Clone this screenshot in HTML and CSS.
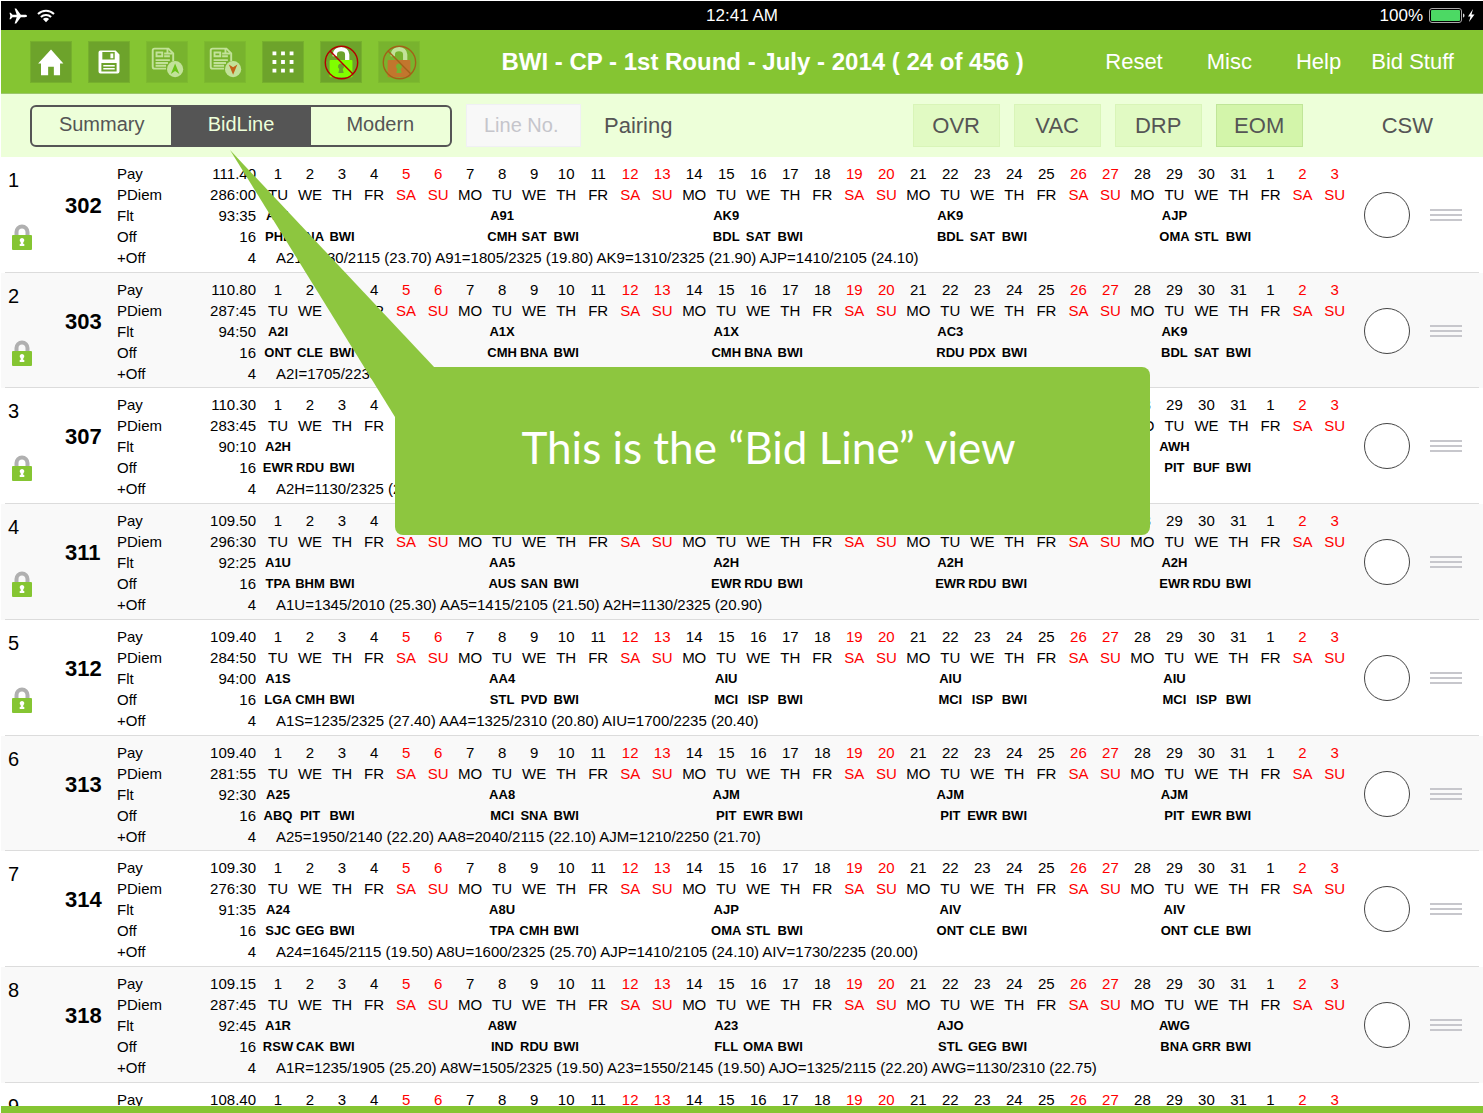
FILE: index.html
```html
<!DOCTYPE html>
<html lang="en">
<head>
<meta charset="utf-8">
<title>BWI - CP - Bid Lines</title>
<link rel="stylesheet" href="styles.css">
</head>
<body>
<div class="app">
  <div class="status">
    <div class="status-side">
      <svg width="18" height="18" viewBox="0 0 18 18" aria-hidden="true"><path fill="#fff" d="M18 9c0-.8-.9-1.200-2-1.200h-4.200L7.200 1.500H5.600l2.100 6.300H3.500L1.700 5.700H.5L1.300 9 .5 12.300h1.200l1.800-2.100h4.200l-2.100 6.300h1.600l4.600-6.300H16c1.100 0 2-.4 2-1.200z"/></svg>
      <svg width="18" height="14" viewBox="0 0 18 14" aria-hidden="true"><g fill="none" stroke="#fff" stroke-width="2"><path d="M1 5a11.500 11.500 0 0 1 16 0"/><path d="M3.900 8a7.300 7.300 0 0 1 10.200 0"/></g><path fill="#fff" d="M9 13.300 5.900 10.100a4.500 4.500 0 0 1 6.200 0z"/></svg>
    </div>
    <div class="status-time">12:41 AM</div>
    <div class="status-side status-right">
      <span>100%</span>
      <svg width="46" height="16" viewBox="0 0 46 16" aria-hidden="true"><rect x=".5" y=".5" width="32" height="14" rx="2.500" fill="none" stroke="#aaa"/><rect x="2" y="2" width="29" height="11" rx="1" fill="#4cd964"/><path fill="#ddd" d="M34 5.500c2 .5 2 3.500 0 4z"/><path fill="#fff" d="M44 1l-5 7.500h2.500L40 14l5.500-7.500h-3z"/></svg>
    </div>
  </div>

  <header class="header">
    <div class="tools">
      <button class="tool" aria-label="Home"><svg viewBox="0 0 42 42"><path fill="#fff" d="M21 8 34 22.500h-3.500V35H24v-9h-6v9h-7.500V22.500H7.500z"/></svg></button>
      <button class="tool" aria-label="Save"><svg viewBox="0 0 42 42"><path fill="#fff" fill-rule="evenodd" d="M12 9h16l4 4v18a2 2 0 0 1-2 2H12a2 2 0 0 1-2-2V11a2 2 0 0 1 2-2zm2 1.500v8h13v-8zm-1 11.500v9h16v-9zM22.500 12h3v5h-3z"/><path stroke="#fff" stroke-width="1.500" d="M15 25h12M15 28h12"/></svg></button>
      <button class="tool" disabled aria-label="Move up"><svg viewBox="0 0 42 42"><g fill="none" stroke="#fff" stroke-width="2"><path d="M27.500 20V12l-5-5H8a2 2 0 0 0-2 2v17a2 2 0 0 0 2 2h12"/><path d="M21.500 7v5h5M10 11h6v4h-6zM18 12h3M18 15h6M9 19h15M9 22h13M9 25h11"/></g><circle cx="29.500" cy="28.500" r="8.500" fill="#fff"/><path fill="#50c000" d="m29.500 22.500 4.500 11-4.500-3-4.500 3z"/></svg></button>
      <button class="tool" disabled aria-label="Move down"><svg viewBox="0 0 42 42"><g fill="none" stroke="#fff" stroke-width="2"><path d="M27.500 20V12l-5-5H8a2 2 0 0 0-2 2v17a2 2 0 0 0 2 2h12"/><path d="M21.500 7v5h5M10 11h6v4h-6zM18 12h3M18 15h6M9 19h15M9 22h13M9 25h11"/></g><circle cx="29.500" cy="28.500" r="8.500" fill="#fff"/><path fill="#f00" d="m29.500 34.500 4.500-11-4.500 3-4.500-3z"/></svg></button>
      <button class="tool" aria-label="Grid"><svg viewBox="0 0 42 42"><path stroke="#fff" stroke-width="4" stroke-dasharray="4 5" d="M10 12h23M10 21h23M10 30h23"/></svg></button>
      <button class="tool" aria-label="Remove top locks"><svg viewBox="0 0 42 42"><path fill="none" stroke="#fff" stroke-width="4.500" d="M14.500 15v-2a6.500 5.500 0 0 1 13 0v7"/><rect x="9" y="19" width="24" height="18" rx="1" fill="#80ff00"/><path fill="#67a12b" d="M21 22.500a3.200 3.200 0 0 1 1.800 5.800l1 4.200h-5.600l1-4.200A3.200 3.200 0 0 1 21 22.500z"/><g fill="none" stroke="#b40000" stroke-width="1.500"><circle cx="21.500" cy="21.500" r="17"/><path d="m9.500 9.500 24 24"/></g></svg></button>
      <button class="tool" disabled aria-label="Remove bottom locks"><svg viewBox="0 0 42 42"><path fill="none" stroke="#fff" stroke-width="4.500" d="M14.500 15v-2a6.500 5.500 0 0 1 13 0v7"/><rect x="9" y="19" width="24" height="18" rx="1" fill="#ff2a2a"/><path fill="#67a12b" d="M21 22.500a3.200 3.200 0 0 1 1.800 5.800l1 4.200h-5.600l1-4.200A3.200 3.200 0 0 1 21 22.500z"/><g fill="none" stroke="#c00000" stroke-width="1.500"><circle cx="21.500" cy="21.500" r="17"/><path d="m9.500 9.500 24 24"/></g></svg></button>
    </div>
    <h1 class="title">BWI - CP - 1st Round - July - 2014 ( 24 of 456 )</h1>
    <nav class="menu">
      <button>Reset</button>
      <button>Misc</button>
      <button>Help</button>
      <button class="menu-last">Bid Stuff</button>
    </nav>
  </header>

  <div class="bar">
    <div class="segments">
      <button>Summary</button>
      <button class="on" aria-pressed="true">BidLine</button>
      <button>Modern</button>
    </div>
    <input class="line-no" type="text" placeholder="Line No." aria-label="Line No.">
    <button class="plain">Pairing</button>
    <div class="filters">
      <button>OVR</button>
      <button>VAC</button>
      <button>DRP</button>
      <button class="on">EOM</button>
    </div>
    <button class="plain">CSW</button>
  </div>

  <main class="list" id="list"></main>
  <div class="foot"></div>

  <aside class="callout">
    <svg class="pointer" width="206" height="267" viewBox="0 0 206 267" aria-hidden="true"><path fill="#8dc63f" d="M0 0 205 218v49h-40z"/></svg>
    <p>This is the “Bid Line” view</p>
  </aside>
</div>
<script src="app.js"></script>
</body>
</html>
```
FILE: styles.css
```css
* { box-sizing: border-box; }
body {
  margin: 0;
  background: #fff;
  color: #000;
  font: 15px/21px "Liberation Sans", Arial, sans-serif;
}
button, input { font: inherit; color: inherit; }
button { padding: 0; border: 0; background: none; }

.app {
  position: relative;
  display: flex;
  flex-direction: column;
  height: 100vh;
  padding: 1px 0 0 1px;
  overflow: hidden;
}

/* status bar */
.status {
  display: flex;
  align-items: center;
  height: 29px;
  padding: 0 8px;
  background: #000;
  color: #fff;
  font-size: 17px;
}
.status-side { display: flex; flex: 1; align-items: center; gap: 10px; }
.status-right { justify-content: flex-end; gap: 6px; }

/* header */
.header {
  display: flex;
  align-items: center;
  justify-content: space-between;
  height: 64px;
  padding: 0 29px;
  background: #85c532;
  border-bottom: 1px solid #9cc76b;
  color: #fff;
  font-size: 22px;
}
.tools { display: flex; gap: 16px; }
.tool {
  width: 42px;
  height: 42px;
  background: #6da32b;
  border: 1px solid #76b02d;
}
.tool:disabled { opacity: .5; }
.tool svg { display: block; width: 100%; height: 100%; }
.title { margin: 0; font-size: 24px; font-weight: bold; white-space: nowrap; }
.menu { display: flex; gap: 44px; }
.menu-last { margin-left: -14px; }

/* view bar */
.bar {
  display: flex;
  align-items: center;
  height: 63px;
  padding: 0 50px 0 29px;
  background: #edffd9;
  color: #555;
  font-size: 22px;
}
.segments {
  display: flex;
  width: 422px;
  height: 42px;
  border: 2px solid #555;
  border-radius: 6px;
  overflow: hidden;
  font-size: 20px;
}
.segments button { flex: 1; padding-bottom: 2px; }
.segments .on { background: #555; color: #edffd9; }
.line-no {
  width: 115px;
  height: 43px;
  margin: 0 23px 0 14px;
  padding: 0 17px;
  border: 1px solid #f0f0f4;
  background: #f8f8f8;
  font-size: 20px;
}
.line-no::placeholder { color: #c5c5cb; opacity: 1; }
.filters { display: flex; gap: 14px; margin: 0 79px 0 auto; }
.filters button {
  width: 87px;
  height: 43px;
  border: 1px solid #d9f5b8;
  background: #e1fac3;
}
.filters .on { background: #d3f5aa; border-color: #c0e698; }

/* bid lines */
.list { flex: 1; overflow: hidden; }
.line {
  display: grid;
  grid-template-columns: 61px 51px 149px 1fr 132px;
  align-items: start;
  height: 116px;
  padding-top: 6px;
  background: linear-gradient(#dcdcdc, #dcdcdc) 4px 100% / calc(100% - 8px) 1px no-repeat;
}
.line:nth-child(even) { background-color: #f9f9f9; }
.line:nth-child(4n+2) { height: 115px; }
.rank { padding: 7px 0 0 7px; font-size: 20px; }
.rank svg { display: block; margin: 33px 0 0 4px; }
.number { padding: 32px 0 0 3px; font-size: 22px; font-weight: bold; }
.stats { margin: 0; padding: 0 6px 0 4px; }
.stats div { display: flex; justify-content: space-between; }
.stats dd { margin: 0; }
.days { width: 100%; border-collapse: collapse; table-layout: fixed; }
.days th, .days td { padding: 0; text-align: center; font-weight: normal; white-space: nowrap; }
.days .weekend { color: #f00; }
.days .trip td { height: 21px; line-height: 21px; font-size: 13px; font-weight: bold; }
.days .legs td { text-align: left; padding: 0 0 0 14px; }
.actions { display: flex; gap: 20px; height: 104px; padding-left: 13px; align-items: center; }
.actions input {
  appearance: none;
  width: 46px;
  height: 46px;
  margin: 0;
  border: 1px solid #444;
  border-radius: 50%;
  background: #fff;
}
.grip { display: grid; gap: 3px; }
.grip i { width: 32px; height: 2px; background: #c7c7cc; }
.foot { height: 7px; background: #85c532; }

/* annotation over the list */
.callout {
  position: absolute;
  top: 367px;
  left: 395px;
  right: 333px;
  display: flex;
  justify-content: center;
  height: 168px;
  padding-right: 8px;
  border-radius: 8px;
  background: #8dc63f;
  color: #fff;
  font: 44px/56px Lato, sans-serif;
}
.callout p { margin: 52px 0 0; white-space: nowrap; }
.pointer { position: absolute; top: -217px; left: -165px; }
```
FILE: app.js
```js
const LINES = [
  ["302", ["111.40", "286:00", "93:35"], ["A21 PHL BNA", "A91 CMH SAT", "AK9 BDL SAT", "AK9 BDL SAT", "AJP OMA STL"],
    "A21=1130/2115 (23.70) A91=1805/2325 (19.80) AK9=1310/2325 (21.90) AJP=1410/2105 (24.10)", true],
  ["303", ["110.80", "287:45", "94:50"], ["A2I ONT CLE", "A1X CMH BNA", "A1X CMH BNA", "AC3 RDU PDX", "AK9 BDL SAT"],
    "A2I=1705/2235", true],
  ["307", ["110.30", "283:45", "90:10"], ["A2H EWR RDU", "", "", "", "AWH PIT BUF"],
    "A2H=1130/2325 (20.90)", true],
  ["311", ["109.50", "296:30", "92:25"], ["A1U TPA BHM", "AA5 AUS SAN", "A2H EWR RDU", "A2H EWR RDU", "A2H EWR RDU"],
    "A1U=1345/2010 (25.30) AA5=1415/2105 (21.50) A2H=1130/2325 (20.90)", true],
  ["312", ["109.40", "284:50", "94:00"], ["A1S LGA CMH", "AA4 STL PVD", "AIU MCI ISP", "AIU MCI ISP", "AIU MCI ISP"],
    "A1S=1235/2325 (27.40) AA4=1325/2310 (20.80) AIU=1700/2235 (20.40)", true],
  ["313", ["109.40", "281:55", "92:30"], ["A25 ABQ PIT", "AA8 MCI SNA", "AJM PIT EWR", "AJM PIT EWR", "AJM PIT EWR"],
    "A25=1950/2140 (22.20) AA8=2040/2115 (22.10) AJM=1210/2250 (21.70)", false],
  ["314", ["109.30", "276:30", "91:35"], ["A24 SJC GEG", "A8U TPA CMH", "AJP OMA STL", "AIV ONT CLE", "AIV ONT CLE"],
    "A24=1645/2115 (19.50) A8U=1600/2325 (25.70) AJP=1410/2105 (24.10) AIV=1730/2235 (20.00)", false],
  ["318", ["109.15", "287:45", "92:45"], ["A1R RSW CAK", "A8W IND RDU", "A23 FLL OMA", "AJO STL GEG", "AWG BNA GRR"],
    "A1R=1235/1905 (25.20) A8W=1505/2325 (19.50) A23=1550/2145 (19.50) AJO=1325/2115 (22.20) AWG=1130/2310 (22.75)", false],
  ["", ["108.40", "", ""], ["", "", "", "", ""], "", false]
];
const WEEKDAYS = ["TU", "WE", "TH", "FR", "SA", "SU", "MO"];
const DAYS = Array.from({ length: 34 }, (_, i) => i);
const LOCK = `<svg width="22" height="26" viewBox="0 0 22 26" role="img" aria-label="Locked">
  <path fill="none" stroke="#b0b0b0" stroke-width="4" d="M4.500 12V8a5.500 5.500 0 0 1 11 0v4"/>
  <rect x="0" y="11" width="20" height="15" rx="1" fill="#85c532"/>
  <path fill="#fff" d="M10 14a2.300 2.300 0 0 1 1.300 4.200V20h1v2H7.700v-2h1v-1.800A2.300 2.300 0 0 1 10 14z"/></svg>`;

const weekend = i => (i % 7 === 4 || i % 7 === 5 ? ' class="weekend"' : "");

function tripCells(trips, row) {
  return DAYS.map(i => {
    const parts = (trips[Math.floor(i / 7)] || "").split(" ");
    const day = i % 7;
    let text = "";
    if (parts.length > 1) {
      if (row === "pairing" && day === 0) text = parts[0];
      if (row === "city" && day < 3) text = parts[day + 1] || "BWI";
    }
    return `<td>${text}</td>`;
  }).join("");
}

document.getElementById("list").innerHTML = LINES.map(([number, stats, trips, legs, locked], n) => {
  const values = [...stats, "16", "4"];
  const rows = ["Pay", "PDiem", "Flt", "Off", "+Off"]
    .map((label, i) => `<div><dt>${label}</dt><dd>${values[i]}</dd></div>`).join("");
  return `<section class="line">
    <div class="rank">${n + 1}${locked ? LOCK : ""}</div>
    <div class="number">${number}</div>
    <dl class="stats">${rows}</dl>
    <table class="days">
      <tr>${DAYS.map(i => `<th${weekend(i)}>${i % 31 + 1}</th>`).join("")}</tr>
      <tr>${DAYS.map(i => `<td${weekend(i)}>${WEEKDAYS[i % 7]}</td>`).join("")}</tr>
      <tr class="trip">${tripCells(trips, "pairing")}</tr>
      <tr class="trip">${tripCells(trips, "city")}</tr>
      <tr class="legs"><td colspan="34">${legs}</td></tr>
    </table>
    <div class="actions">
      <input type="checkbox" aria-label="Select line ${number}">
      <span class="grip"><i></i><i></i><i></i></span>
    </div>
  </section>`;
}).join("");
```
